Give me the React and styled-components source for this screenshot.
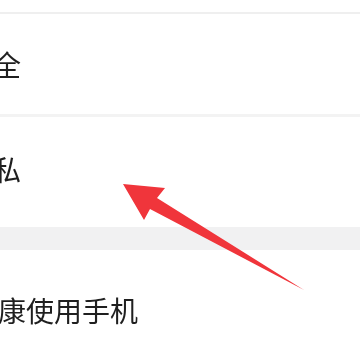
import styled, { createGlobalStyle } from 'styled-components'

const GlobalStyle = createGlobalStyle`
  html, body {
    margin: 0;
    padding: 0;
    background: #ffffff;
    overflow: hidden;
  }
`

const Page = styled.div`
  position: relative;
  width: 360px;
  height: 360px;
  overflow: hidden;
  background: #ffffff;
  display: flex;
  flex-direction: column;
  font-family: "Noto Sans CJK SC", "Noto Sans", sans-serif;
`

const TopGap = styled.div`
  height: 12px;
  flex-shrink: 0;
  border-bottom: 2px solid #efefef;
`

const Row = styled.div`
  height: ${({ $height }) => $height}px;
  flex-shrink: 0;
  display: flex;
  align-items: center;
  padding-bottom: ${({ $lift }) => $lift || 0}px;
  box-sizing: border-box;
  border-bottom: ${({ $divider }) => ($divider ? '3px solid #f3f3f3' : 'none')};
`

const Label = styled.span`
  margin-left: ${({ $shift }) => $shift}px;
  font-size: 28px;
  line-height: 1;
  color: #1f1f1f;
  white-space: nowrap;
  filter: blur(0.5px);
`

const GroupGap = styled.div`
  height: 23px;
  flex-shrink: 0;
  background: #f1f1f2;
`

const ArrowLayer = styled.svg`
  position: absolute;
  left: 0;
  top: 0;
  width: 360px;
  height: 360px;
  pointer-events: none;
`

function Arrow() {
  return (
    <ArrowLayer viewBox="0 0 360 360">
      <defs>
        <filter id="soft" x="-10%" y="-10%" width="120%" height="120%">
          <feGaussianBlur stdDeviation="0.7" />
        </filter>
      </defs>
      <polygon
        points="123,184 165,188 157,198 304,290 150,209 144,220"
        fill="#f0343a"
        filter="url(#soft)"
      />
    </ArrowLayer>
  )
}

export default function App() {
  return (
    <>
      <GlobalStyle />
      <Page>
        <TopGap />
        <Row $height={103} $divider>
          <Label $shift={-35}>安全</Label>
        </Row>
        <Row $height={110} $lift={6}>
          <Label $shift={-35}>隐私</Label>
        </Row>
        <GroupGap />
        <Row $height={130} $lift={10}>
          <Label $shift={-30}>健康使用手机</Label>
        </Row>
        <Arrow />
      </Page>
    </>
  )
}
